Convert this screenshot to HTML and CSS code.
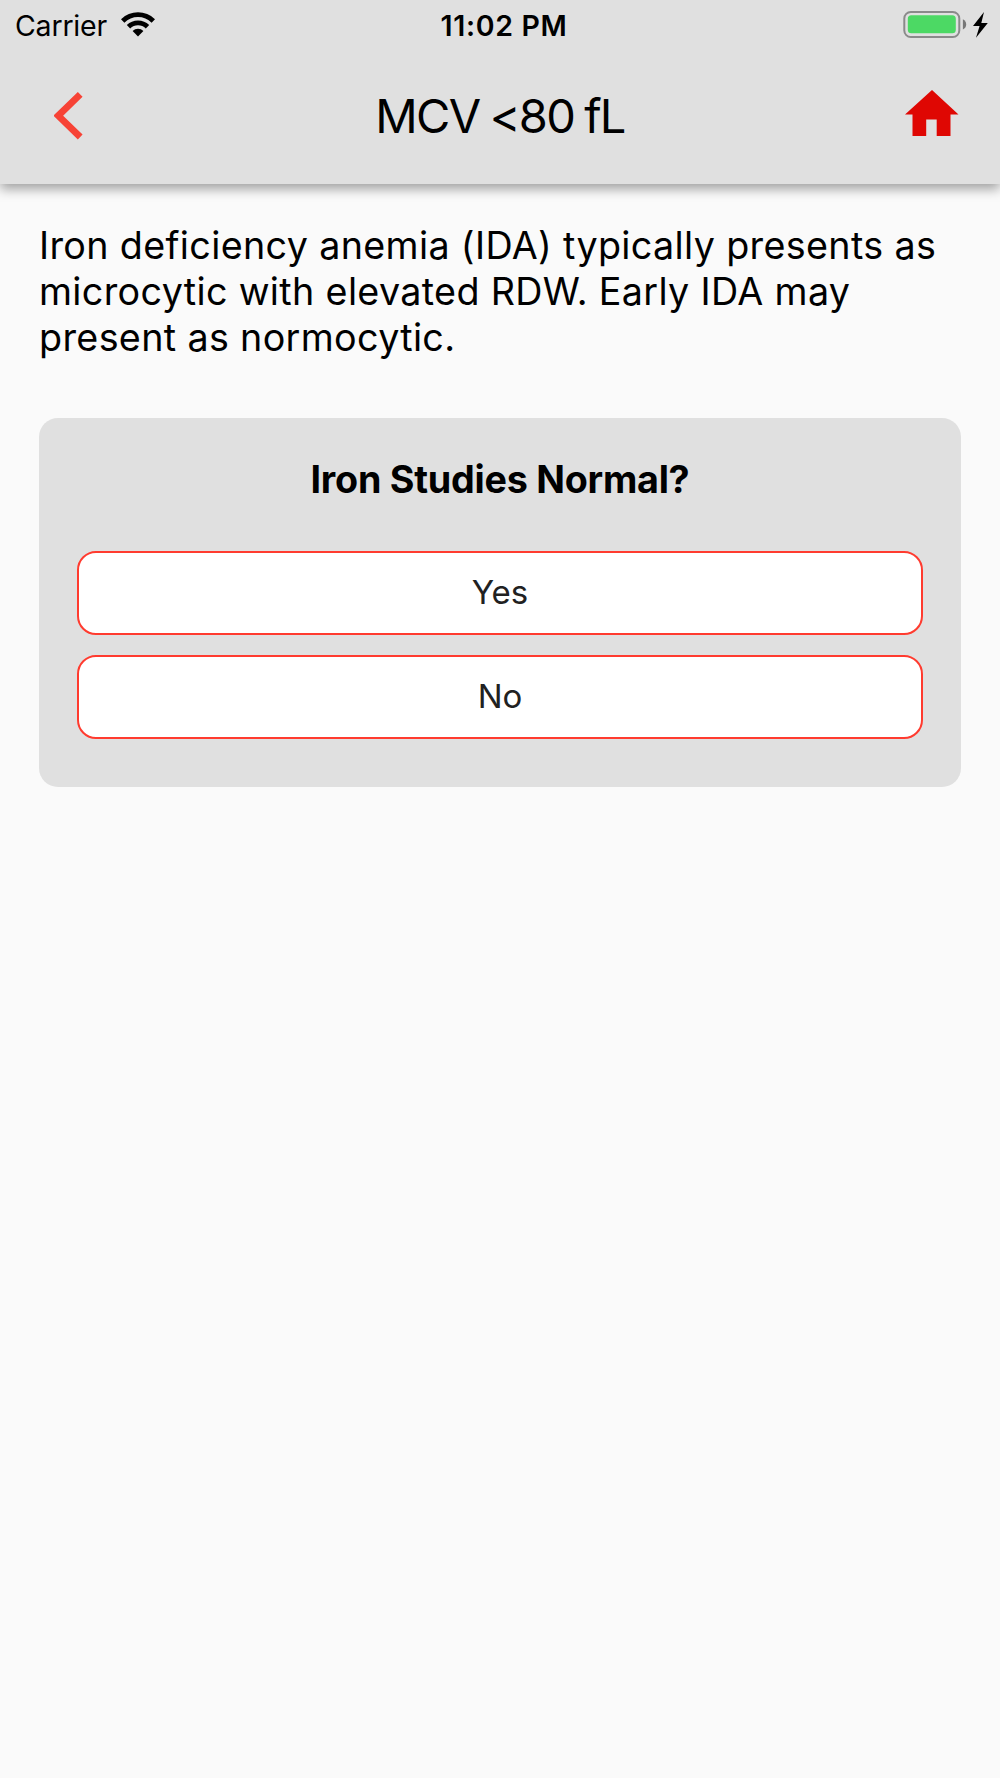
FILE: index.html
```html
<!DOCTYPE html>
<html lang="en">
<head>
<meta charset="utf-8">
<title>MCV &lt;80 fL</title>
<link rel="stylesheet" href="styles.css">
</head>
<body>
<header class="header">
  <div class="status">
    <div class="status-left">
      <span class="carrier">Carrier</span>
      <svg class="wifi" width="34" height="25" viewBox="0 0 34 25">
        <path d="M0 7.2A24.5 24.5 0 0 1 34 7.2L30.6 10.7A19.2 19.2 0 0 0 3.4 10.7Z"/>
        <path d="M5.8 13.1A16 16 0 0 1 28.2 13.1L24.8 16.5A11.2 11.2 0 0 0 9.2 16.5Z"/>
        <path d="M11.6 18.9A7.8 7.8 0 0 1 22.4 18.9L17 24.4Z"/>
      </svg>
    </div>
    <span class="time">11:02 PM</span>
    <div class="status-right">
      <svg class="battery" width="86" height="28" viewBox="0 0 86 28">
        <rect x="1.3" y="1" width="55" height="25" rx="6.5" fill="none" stroke="#8a8a8a" stroke-width="2"/>
        <rect x="4.8" y="4.3" width="48" height="18" rx="3.5" fill="#4cd964"/>
        <path d="M59.9 8.3Q63.2 10.2 63.2 13.4T59.9 18.5Z" fill="#777"/>
        <path d="M81 1L70 15H76.6L73 26.8L84.8 12H78.3Z"/>
      </svg>
    </div>
  </div>
  <nav class="nav">
    <svg class="back" width="30" height="50" viewBox="0 0 30 50"><path d="M26.2 3.4L4.2 24.7L26.2 46" fill="none" stroke="#f74336" stroke-width="6.8"/></svg>
    <h1 class="title">MCV &lt;80 fL</h1>
    <svg class="home" width="54" height="46" viewBox="0 0 54 46"><path d="M27 0L53.5 24.4H45.5V46H31.7V29.5H21.2V46H7.5V24.4H0Z" fill="#df0703"/></svg>
  </nav>
</header>
<main class="content">
  <p class="intro">Iron deficiency anemia (IDA) typically presents as microcytic with elevated RDW. Early IDA may present as normocytic.</p>
  <section class="card">
    <h2 class="question">Iron Studies Normal?</h2>
    <button class="answer">Yes</button>
    <button class="answer">No</button>
  </section>
</main>
</body>
</html>
```
FILE: styles.css
```css
* { box-sizing: border-box; }
body {
  margin: 0;
  min-height: 1778px;
  background: #fafafa;
  color: #000;
  font-family: Inter, "Liberation Sans", sans-serif;
}
.header {
  height: 184px;
  background: #e0e0e0;
  box-shadow: 0 5px 11px rgba(0, 0, 0, 0.36);
}
.status {
  height: 50px;
  padding: 0 11px 0 15px;
  display: grid;
  grid-template-columns: 1fr auto 1fr;
  align-items: center;
  font-size: 28.5px;
  line-height: 52px;
}
.status-left { display: flex; align-items: center; gap: 14px; }
.carrier { letter-spacing: -0.2px; }
.wifi { margin-top: -3px; }
.battery { margin-top: -2px; }
.status-right { display: flex; justify-content: flex-end; }
.time { padding-left: 4px; font-weight: 600; letter-spacing: 0.7px; font-kerning: none; }
.nav {
  height: 134px;
  padding: 0 41px 4px;
  display: grid;
  grid-template-columns: 1fr auto 1fr;
  align-items: center;
}
.back { margin: 2px 0 0 12.5px; }
.home { justify-self: end; margin-bottom: 5px; }
.title {
  margin: 0;
  font-size: 47px;
  font-weight: 400;
  letter-spacing: -1.7px;
  word-spacing: -1.5px;
}
.content { padding: 38px 39px 0; }
.intro {
  margin: 0 0 58px;
  font-size: 37.7px;
  line-height: 46px;
  letter-spacing: 0.34px;
}
.card {
  height: 369px;
  padding: 38px;
  border-radius: 19px;
  background: #e0e0e0;
}
.question {
  margin: 0 0 49px;
  font-size: 37.7px;
  line-height: 46px;
  font-weight: 700;
  letter-spacing: -0.25px;
  text-align: center;
}
.answer {
  display: block;
  width: 100%;
  height: 84px;
  margin-bottom: 20px;
  padding: 0 0 2px;
  border: 2px solid #ff3b2f;
  border-radius: 19px;
  background: #fff;
  color: #212121;
  font: 400 33px Inter, sans-serif;
}
```
